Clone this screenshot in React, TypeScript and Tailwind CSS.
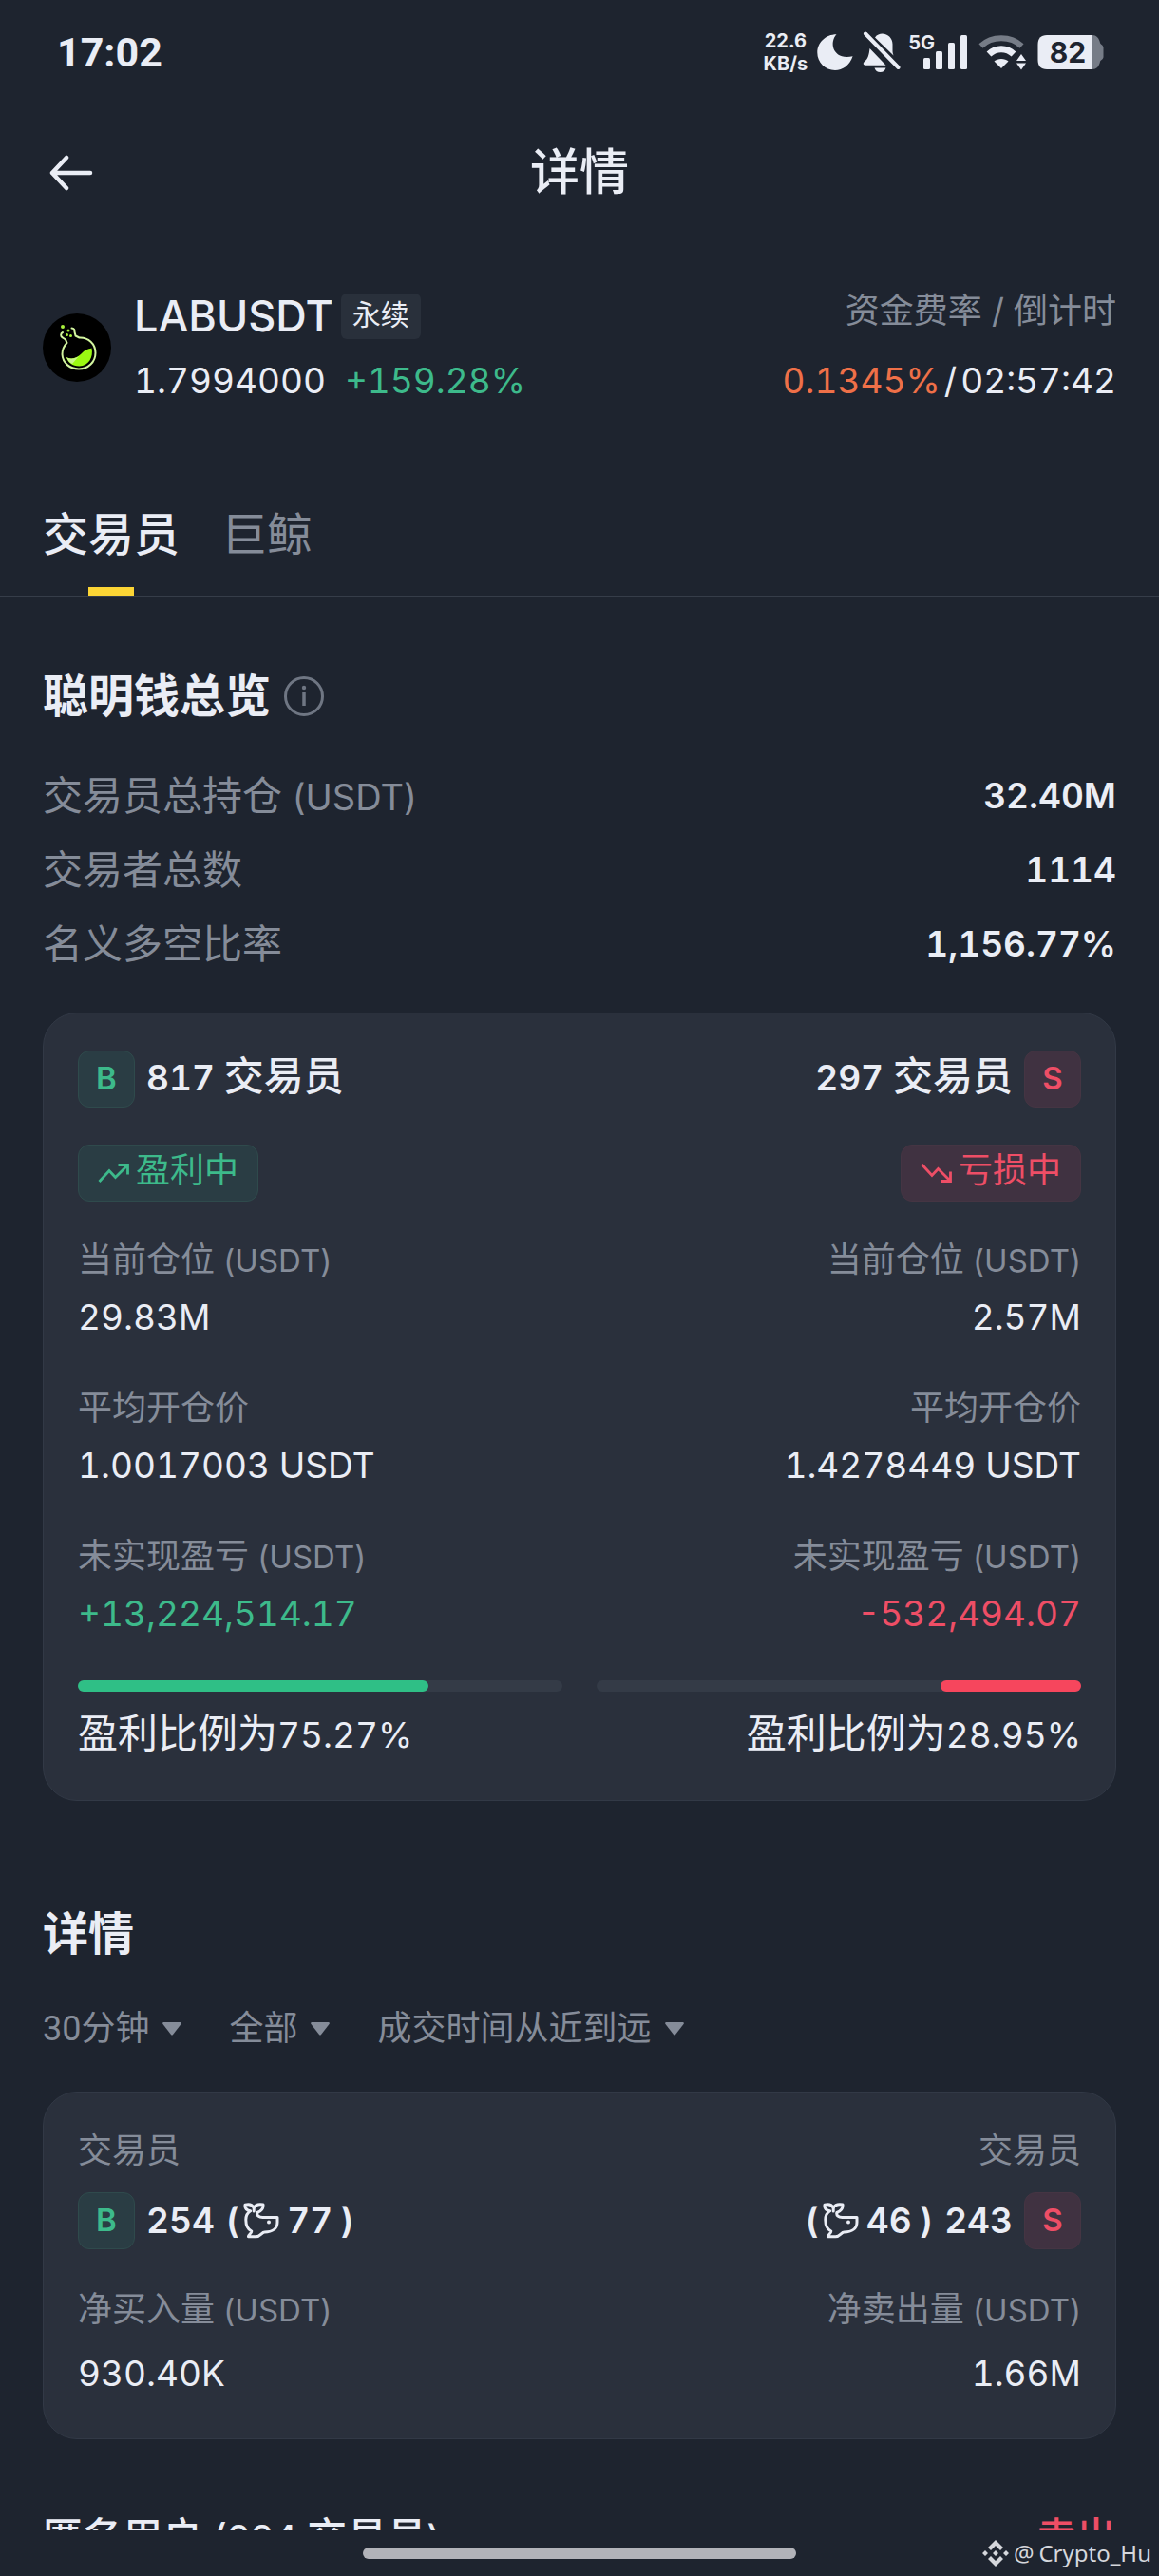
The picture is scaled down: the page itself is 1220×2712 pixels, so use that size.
import { useState, type ReactNode } from "react";

type Side = "buy" | "sell";

const overviewRows = [
  { label: "交易员总持仓", unit: "(USDT)", value: "32.40M" },
  { label: "交易者总数", value: "1114" },
  { label: "名义多空比率", value: "1,156.77%" },
];

const positions = [
  {
    side: "buy" as Side,
    count: "817",
    status: "盈利中",
    size: "29.83M",
    entry: "1.0017003 USDT",
    pnl: "+13,224,514.17",
    ratio: "75.27%",
    bar: 72.4,
  },
  {
    side: "sell" as Side,
    count: "297",
    status: "亏损中",
    size: "2.57M",
    entry: "1.4278449 USDT",
    pnl: "-532,494.07",
    ratio: "28.95%",
    bar: 29,
  },
];

const filters = [
  { name: "时间范围", options: ["30分钟", "1小时", "4小时"] },
  { name: "方向", options: ["全部", "买入", "卖出"] },
  { name: "排序", options: ["成交时间从近到远", "成交时间从远到近"] },
];

/* ---------- icons ---------- */

function MoonIcon() {
  return (
    <svg viewBox="0 0 38 38" className="size-[38px]" fill="currentColor">
      <path d="M20.5 0.3C12 9.5 17.5 28 37.6 23.2C34.5 32.5 27 38 19 38C8.5 38 0.3 29.5 0.3 19.5C0.3 9 9 0.3 20.5 0.3Z" />
    </svg>
  );
}

function BellOffIcon() {
  return (
    <svg viewBox="0 0 40 44" className="h-11 w-10" fill="currentColor">
      <path d="M7.5 18L24.5 35.8H3.500C0.5 35.8 0 33.5 2 31.8C6 28.5 6.5 25 7.5 18Z" />
      <path d="M13 6.5C15 3.5 18 2.5 20.5 2.5C27 2.5 31.5 7.5 31.5 13.5V20.5C31.5 22.5 32 24 32.5 25.5Z" />
      <path d="M12.5 38.5H24.5C23.5 41.5 21.5 43 18.5 43C15.5 43 13.5 41.5 12.5 38.5Z" />
      <path d="M3 2.5L37.5 38" stroke="currentColor" strokeWidth="4" strokeLinecap="round" />
    </svg>
  );
}

function SignalIcon() {
  return (
    <svg viewBox="0 0 46 36" className="h-9 w-[46px]" fill="currentColor">
      <rect x="0" y="24" width="7" height="12" rx="1.5" />
      <rect x="13" y="17" width="7" height="19" rx="1.5" />
      <rect x="26" y="8" width="7" height="28" rx="1.5" />
      <rect x="39" y="0" width="7" height="36" rx="1.5" />
    </svg>
  );
}

function WifiIcon() {
  return (
    <svg viewBox="0 0 50 38" className="h-[38px] w-[50px]" fill="none">
      <path d="M2.5 12.5C14 1.5 34 1.5 45.5 12.5" stroke="#767c87" strokeWidth="6" />
      <path d="M11 21C18.5 14 29.5 14 37 21" stroke="currentColor" strokeWidth="7" />
      <path d="M16.5 28.5C20 25 28 25 31.5 28.5L24 36Z" fill="currentColor" />
      <path d="M45 21L50 28H40ZM45 37.5L50 30.5H40Z" fill="currentColor" />
    </svg>
  );
}

function BatteryIcon() {
  return (
    <svg viewBox="0 0 70 38" className="h-[38px] w-[70px]">
      <path d="M56 1H58C62 1 65 4 66 9C66.5 11 69.5 11.5 69.5 14V24C69.5 26.5 66.5 27 66 29C65 34 62 37 58 37H56Z" fill="#767c87" />
      <path d="M10 1H57V37H10C3.5 37 0.5 33.5 0.5 27V11C0.5 4.5 3.5 1 10 1Z" fill="currentColor" />
    </svg>
  );
}

function BackIcon() {
  return (
    <svg viewBox="0 0 48 38" className="h-[38px] w-12" fill="none" stroke="currentColor" strokeWidth="4.5" strokeLinecap="round" strokeLinejoin="round">
      <path d="M20 3L5 19L20 35M5 19H45" />
    </svg>
  );
}

function FlaskLogo() {
  return (
    <svg viewBox="0 0 72 72" className="size-[72px] shrink-0">
      <circle cx="36" cy="36" r="36" fill="#000" />
      <g fill="none" stroke="#d3f5a0" strokeWidth="2" strokeLinecap="round" strokeLinejoin="round">
        <path d="M21 20C18.5 21 18.5 24.5 21 25.500L24 27.5L25.5 31C21.5 35 20.5 39 20.5 43C21 52 28.5 58.5 38 58.5C48 58.5 55.5 51 55.5 41.5C55.5 32 48 25 38.5 25.5L34.5 23.5L33.5 19.5C34 17.5 33 15.5 30.5 15.5" />
      </g>
      <path d="M25 46C30 49 36 47 40.5 42.5C44 38.5 47.5 37.5 51.5 36.5C53.5 46 48.5 55 38.5 55.5C31 55.5 26.5 51.5 25 46Z" fill="#9bfa12" />
      <path d="M25 46C30 49 36 47 38.5 44.5L31 53C28 51.5 26 49.5 25 46Z" fill="#c9f58a" />
      <g fill="#a8f03c">
        <circle cx="21" cy="14" r="2" />
        <circle cx="27" cy="18" r="1.5" />
        <circle cx="25.5" cy="22.5" r="1.5" />
        <circle cx="29.5" cy="23.5" r="1.5" />
      </g>
    </svg>
  );
}

function InfoIcon() {
  return (
    <svg viewBox="0 0 42 42" className="size-[42px]" fill="none" stroke="currentColor" strokeWidth="3">
      <circle cx="21" cy="21" r="19.5" />
      <path d="M21 17V31" strokeWidth="3.5" />
      <circle cx="21" cy="12" r="2.2" fill="currentColor" stroke="none" />
    </svg>
  );
}

function TrendIcon({ side }: { side: Side }) {
  return (
    <svg viewBox="0 0 34 22" className="h-[22px] w-[34px]" fill="none" stroke="currentColor" strokeWidth="2.8">
      {side === "buy" ? (
        <path d="M1.5 20L12 8.5L18.5 15.5L31 3M21.5 2.5H31.5V12.5" />
      ) : (
        <path d="M1.5 2L12 13.5L18.5 6.5L31 19M21.5 19.5H31.5V9.5" />
      )}
    </svg>
  );
}

function WhaleIcon() {
  return (
    <svg viewBox="0 0 38 38" className="size-[38px]" fill="none" stroke="currentColor" strokeWidth="3" strokeLinejoin="round" strokeLinecap="round">
      <path d="M2 2.2C6 1.2 9.5 2 11.2 5.2C13 2 17 1.2 21 2C21.3 6.2 19 9 14.8 10.5C14.2 13.5 16.5 15.6 20.5 15.6H36V20.5C36 27 31 31 22.5 31C19.5 31 18 35.8 13.5 35.8H5.5C5 33.8 8.8 32.8 8.8 30C4.5 27.8 2.8 23 2.8 18C2.8 14 4.6 10.6 7.6 8.8C3.5 8.2 1.6 6 2 2.2Z" />
      <path d="M11.2 5.200V9" />
      <circle cx="27" cy="20.5" r="2" fill="currentColor" stroke="none" />
    </svg>
  );
}

function BinanceMark() {
  return (
    <svg viewBox="0 0 28 28" className="size-7" fill="currentColor">
      <path d="M14 0L22 8L19 11L14 6L9 11L6 8ZM14 28L22 20L19 17L14 22L9 17L6 20ZM14 11L17 14L14 17L11 14ZM3 11L6 14L3 17L0 14ZM25 11L28 14L25 17L22 14Z" />
    </svg>
  );
}

/* ---------- small parts ---------- */

function SideBadge({ side }: { side: Side }) {
  return (
    <span
      className={`flex size-[60px] items-center justify-center rounded-xl border text-[33px] font-semibold ${
        side === "buy"
          ? "border-[#2f4a4c] bg-[#2a3d44] text-[#3dba8b]"
          : "border-[#453543] bg-[#403241] text-[#ee4e66]"
      }`}
    >
      {side === "buy" ? "B" : "S"}
    </span>
  );
}

function StatLabel({ text, unit }: { text: string; unit?: string }) {
  return (
    <dt className="text-[36px] leading-11 text-[#858c99]">
      {text}
      {unit && <span className="text-[33px] leading-none"> {unit}</span>}
    </dt>
  );
}

function Stat({ label, unit, value, tone = "" }: { label: string; unit?: string; value: string; tone?: string }) {
  return (
    <div className="flex flex-col gap-[17px]">
      <StatLabel text={label} unit={unit} />
      <dd className={`text-[37px] leading-11 tabular-nums ${tone}`}>{value}</dd>
    </div>
  );
}

function Card({ children }: { children: ReactNode }) {
  return (
    <div className="grid grid-cols-2 gap-x-9 rounded-[36px] border border-[#323946] bg-[#2a303c] px-9 pt-[39px] pb-[46px]">
      {children}
    </div>
  );
}

function PositionColumn({ data }: { data: (typeof positions)[number] }) {
  const isBuy = data.side === "buy";
  return (
    <div className={`flex flex-col ${isBuy ? "items-start" : "items-end text-right"}`}>
      <div className={`flex items-center gap-3 ${isBuy ? "" : "flex-row-reverse"}`}>
        <SideBadge side={data.side} />
        <span className="pb-1 text-[37px] leading-11 font-semibold tabular-nums">
          {data.count} <span className="text-[42px] leading-none font-medium">交易员</span>
        </span>
      </div>
      <div
        className={`mt-[39px] flex h-[60px] items-center gap-1.5 rounded-xl border px-5 text-[36px] ${
          isBuy
            ? "border-[#2f4a4c] bg-[#2a3d44] text-[#3dba8b]"
            : "border-[#453543] bg-[#403241] text-[#ee4e66]"
        }`}
      >
        <TrendIcon side={data.side} />
        <span className="pb-1.5 leading-11">{data.status}</span>
      </div>
      <dl className="mt-[39px] flex flex-col gap-[51px]">
        <Stat label="当前仓位" unit="(USDT)" value={data.size} />
        <Stat label="平均开仓价" value={data.entry} />
        <Stat label="未实现盈亏" unit="(USDT)" value={data.pnl} tone={isBuy ? "text-[#3dba8b]" : "text-[#ee4e66]"} />
      </dl>
      <div className={`mt-12 flex h-3 w-full rounded-full bg-[#343b47] ${isBuy ? "" : "justify-end"}`}>
        <div
          className={`h-full rounded-full ${isBuy ? "bg-[#2fbf86]" : "bg-[#f6465d]"}`}
          style={{ width: `${data.bar}%` }}
        />
      </div>
      <p className="mt-5 text-[42px] leading-12">
        盈利比例为<span className="text-[37px] leading-none tabular-nums">{data.ratio}</span>
      </p>
    </div>
  );
}

function FlowColumn({ side, total, whales, label, value }: { side: Side; total: string; whales: string; label: string; value: string }) {
  const isBuy = side === "buy";
  return (
    <dl className={`flex flex-col ${isBuy ? "items-start" : "items-end text-right"}`}>
      <StatLabel text="交易员" />
      <dd className={`mt-[22px] flex items-center gap-3 text-[37px] font-semibold tabular-nums ${isBuy ? "" : "flex-row-reverse"}`}>
        <SideBadge side={side} />
        <span className={`flex items-center gap-3 ${isBuy ? "" : "flex-row-reverse"}`}>
          <span>{total}</span>
          <span className="flex items-center gap-1">
            <span>(</span>
            <WhaleIcon />
            <span className="pl-1">{whales}</span>
            <span className="pl-1">)</span>
          </span>
        </span>
      </dd>
      <div className="mt-[41px] flex flex-col gap-6">
        <StatLabel text={label} unit="(USDT)" />
        <dd className="text-[37px] leading-11 tabular-nums">{value}</dd>
      </div>
    </dl>
  );
}

function FilterSelect({ name, options }: { name: string; options: string[] }) {
  return (
    <label className="flex items-center gap-3.5">
      <select
        aria-label={name}
        className="field-sizing-content h-11 appearance-none bg-transparent p-0 font-['Roboto','Noto_Sans_CJK_SC',sans-serif] text-[36px] leading-11 outline-none"
      >
        {options.map((o) => (
          <option key={o}>{o}</option>
        ))}
      </select>
      <svg viewBox="0 0 20 14" className="h-[14px] w-5" fill="currentColor">
        <path d="M1 0H19Q20.5 0.5 19.5 2L11 13Q10 14 9 13L0.5 2Q-0.5 0.5 1 0Z" />
      </svg>
    </label>
  );
}

/* ---------- page ---------- */

export default function App() {
  const [tab, setTab] = useState("交易员");

  return (
    <div className="flex h-screen flex-col bg-[#1e242f] font-['Inter','Noto_Sans_CJK_SC',sans-serif] text-[#eaedf5]">
      {/* Status bar */}
      <div className="flex h-[110px] shrink-0 items-center justify-between pr-[58px] pl-15">
        <span className="font-['Roboto',sans-serif] text-[43px] leading-none font-bold">17:02</span>
        <div className="flex items-center gap-2">
          <div className="flex items-center gap-2.5">
            <div className="text-center text-[20px] leading-6 font-bold">
              <div>22.6</div>
              <div>KB/s</div>
            </div>
            <MoonIcon />
            <BellOffIcon />
          </div>
          <div className="flex items-center gap-3">
            <div className="flex items-end">
              <span className="-mr-3 self-start text-[20px] leading-4 font-bold">5G</span>
              <SignalIcon />
            </div>
            <WifiIcon />
            <div className="relative">
              <BatteryIcon />
              <span className="absolute inset-y-0 left-0 flex w-16 items-center justify-center text-[30px] font-bold text-[#1e242f]">
                82
              </span>
            </div>
          </div>
        </div>
      </div>

      {/* Nav */}
      <header className="grid h-36 shrink-0 grid-cols-[1fr_auto_1fr] items-center px-[50px]">
        <button type="button" aria-label="返回" className="justify-self-start">
          <BackIcon />
        </button>
        <h1 className="text-[52px] leading-none font-medium">详情</h1>
      </header>

      <main className="min-h-0 flex-1 overflow-hidden">
        {/* Symbol */}
        <section className="mt-[55px] flex items-center gap-6 px-[45px]">
          <FlaskLogo />
          <div className="flex flex-1 flex-col gap-[22px]">
            <div className="flex items-start justify-between">
              <div className="flex items-center gap-2">
                <span className="text-[45px] leading-12 font-medium">LABUSDT</span>
                <span className="rounded-md bg-[#29303b] px-3 pb-1 text-[30px] leading-11">永续</span>
              </div>
              <span className="text-[36px] leading-9 text-[#858c99]">资金费率 / 倒计时</span>
            </div>
            <div className="flex items-center justify-between text-[37px] leading-11 tabular-nums">
              <div className="flex gap-5">
                <span>1.7994000</span>
                <span className="text-[#3dba8b]">+159.28%</span>
              </div>
              <div className="flex gap-1">
                <span className="text-[#ef7048]">0.1345%</span>
                <span>/</span>
                <span>02:57:42</span>
              </div>
            </div>
          </div>
        </section>

        {/* Tabs */}
        <div role="tablist" className="mt-[108px] flex gap-11 border-b border-[#363d49] px-[45px]">
          {["交易员", "巨鲸"].map((t) => (
            <button
              key={t}
              type="button"
              role="tab"
              aria-selected={tab === t}
              onClick={() => setTab(t)}
              className={`flex flex-col items-center gap-[23px] text-[48px] leading-16 ${
                tab === t ? "font-medium" : "text-[#858c99]"
              }`}
            >
              {t}
              <span className={`h-[9px] w-12 ${tab === t ? "bg-[#fcd535]" : ""}`} />
            </button>
          ))}
        </div>

        {/* Overview */}
        <section className="px-[45px] pt-[77px]">
          <div className="flex items-center gap-3.5">
            <h2 className="text-[48px] leading-14 font-semibold">聪明钱总览</h2>
            <button type="button" aria-label="说明" className="text-[#6f7683]">
              <InfoIcon />
            </button>
          </div>
          <dl className="mt-[53px] mb-12 flex flex-col gap-[30px]">
            {overviewRows.map((row) => (
              <div key={row.label} className="flex items-center justify-between leading-12">
                <dt className="text-[42px] text-[#858c99]">
                  {row.label}
                  {row.unit && <span className="text-[38px] leading-none"> {row.unit}</span>}
                </dt>
                <dd className="text-[37px] font-semibold tabular-nums">{row.value}</dd>
              </div>
            ))}
          </dl>
          <Card>
            {positions.map((p) => (
              <PositionColumn key={p.side} data={p} />
            ))}
          </Card>
        </section>

        {/* Details */}
        <section className="px-[45px] pt-28">
          <h2 className="text-[48px] leading-14 font-semibold">详情</h2>
          <div className="mt-[50px] mb-11 flex gap-[50px] text-[#858c99]">
            {filters.map((f) => (
              <FilterSelect key={f.name} name={f.name} options={f.options} />
            ))}
          </div>
          <Card>
            <FlowColumn side="buy" total="254" whales="77" label="净买入量" value="930.40K" />
            <FlowColumn side="sell" total="243" whales="46" label="净卖出量" value="1.66M" />
          </Card>
          <div className="mt-[75px] flex justify-between text-[42px] leading-14 font-medium">
            <span>
              匿名用户 <span className="text-[38px] leading-none tabular-nums">(224 </span>交易员
              <span className="text-[38px] leading-none">)</span>
            </span>
            <span className="text-[#ee4e66]">卖出</span>
          </div>
        </section>
      </main>

      {/* Home indicator */}
      <footer className="grid h-12 shrink-0 grid-cols-[1fr_456px_1fr] items-center">
        <span className="col-start-2 h-3 rounded-full bg-[#b2b3b9]" />
        <span className="flex items-center gap-[5px] justify-self-end pr-2 font-['Noto_Sans',sans-serif] text-[24px] leading-none text-[#d5d7dc]">
          <BinanceMark />
          <span>@</span>
          <span>Crypto_Hu</span>
        </span>
      </footer>
    </div>
  );
}
